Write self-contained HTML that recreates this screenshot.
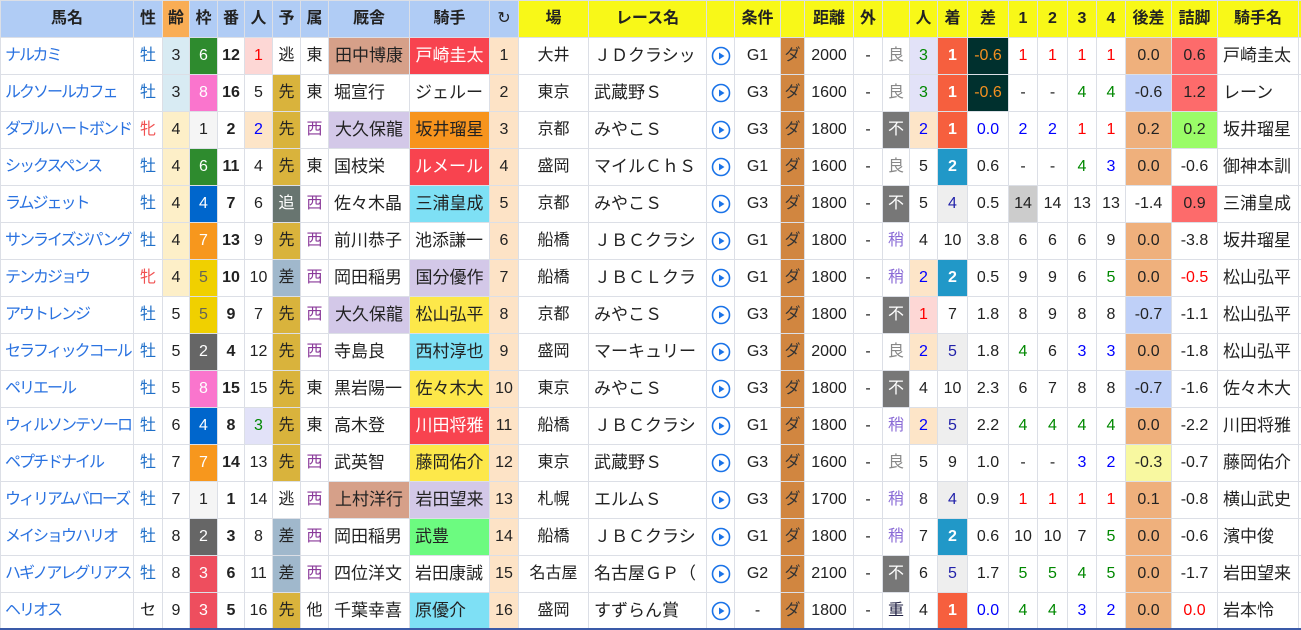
<!DOCTYPE html>
<html><head><meta charset="utf-8">
<style>
*{box-sizing:border-box;margin:0;padding:0}
body{width:1301px;height:630px;overflow:hidden;background:#fff;font-family:"Liberation Sans","Noto Sans CJK JP",sans-serif;font-size:16px;color:#222}
table{border-collapse:collapse;table-layout:fixed;width:1301px;position:absolute;left:0;top:0}
td,th{border:1px solid #dcdfe6;text-align:center;white-space:nowrap;overflow:hidden;padding:0;line-height:20px}
tr{height:37px}
th{font-weight:bold;background:#b0ccf5;color:#222;font-size:16px}
th.y{background:#f8f818}
th.o{background:#f9ad55}
td.n{text-align:left;padding-left:4px;color:#2a72e0;font-size:16px;letter-spacing:-2px}
td.l{text-align:left;padding-left:5px;font-size:17px}
td.k1,td.k2,td[class^="j"]{font-size:17px}
.m{color:#1f6fc8}.f{color:#f05050}
.a3{background:#d8ebf3}.a4{background:#fdefc8}
.w1{background:#f5f5f5}.w2{background:#666;color:#fff}.w3{background:#ee4e5e;color:#fff}.w4{background:#0066cc;color:#fff}.w5{background:#f0d000;color:#665}.w6{background:#2e8b2e;color:#fff}.w7{background:#f7971d;color:#fff}.w8{background:#fa75cd;color:#fff}
.b{font-weight:bold}
.p1{background:#fdd7d5;color:#f00}.p2{background:#fde5c8;color:#00f}.p3{background:#e2e2f8;color:#080}
.s{background:#d9b33c}.t{background:#687570;color:#fff}.d{background:#a0b8cc}
.W{color:#8a3a9a}
.k1{background:#d6a089}.k2{background:#d3c8e8}
.j1{background:#f8434f;color:#fff}.j2{background:#f7941d}.j3{background:#fde84a}.j4{background:#7ee0f5}.j5{background:#d3c8e8}.j6{background:#6cfb80}
.r{background:#fde3c6}
.da{background:#d18640;color:#333}
.fu{background:#777;color:#fff}.ry{color:#888}.yy{color:#8a6bd6}.om{color:#224}
.c1{background:#f65f3e;color:#fff;font-weight:bold}.c2{background:#2198c8;color:#fff;font-weight:bold}.c4{background:#eee;color:#22a}
.dk{background:#00302e;color:#f39020}
.R{color:#f00}.B{color:#00f}.G{color:#080}
.go{background:#efb07c}.gb{background:#bfd0f8}.gy{background:#f8f8a0}
.zr{background:#fd6b6b}.zg{background:#9afc68}
.gr{background:#ccc}
svg{display:block;margin:auto}
.bot{position:absolute;left:0;top:628px;width:1301px;height:2px;background:#3a5aa8}
</style></head><body>
<table>
<colgroup>
<col style="width:133px"><col style="width:29px"><col style="width:27px"><col style="width:28px"><col style="width:27px"><col style="width:28px"><col style="width:28px"><col style="width:28px"><col style="width:81px"><col style="width:80px"><col style="width:29px"><col style="width:70px"><col style="width:118px"><col style="width:28px"><col style="width:46px"><col style="width:24px"><col style="width:49px"><col style="width:29px"><col style="width:27px"><col style="width:28px"><col style="width:30px"><col style="width:41px"><col style="width:29px"><col style="width:30px"><col style="width:29px"><col style="width:29px"><col style="width:46px"><col style="width:46px"><col style="width:81px"><col style="width:3px">
</colgroup>
<tr><th>馬名</th><th>性</th><th class="o">齢</th><th>枠</th><th>番</th><th>人</th><th>予</th><th>属</th><th>厩舎</th><th>騎手</th><th style="font-weight:normal">↻</th><th class="y">場</th><th class="y">レース名</th><th class="y"></th><th class="y">条件</th><th class="y"></th><th class="y">距離</th><th class="y">外</th><th class="y"></th><th class="y">人</th><th class="y">着</th><th class="y">差</th><th class="y">1</th><th class="y">2</th><th class="y">3</th><th class="y">4</th><th class="y">後差</th><th class="y">詰脚</th><th class="y">騎手名</th><th class="y"></th></tr>
<tr><td class="n">ナルカミ</td><td class="m">牡</td><td class="a3">3</td><td class="w6">6</td><td class="b">12</td><td class="p1">1</td><td>逃</td><td>東</td><td class="k1">田中博康</td><td class="j1">戸崎圭太</td><td class="r">1</td><td>大井</td><td class="l">ＪＤクラシッ</td><td><svg width="20" height="20"><circle cx="10" cy="10" r="8.5" fill="none" stroke="#1a73e8" stroke-width="1.6"/><path d="M8 6.5L13.5 10L8 13.5Z" fill="#1a73e8"/></svg></td><td>G1</td><td class="da">ダ</td><td>2000</td><td>-</td><td class="ry">良</td><td class="p3">3</td><td class="c1">1</td><td class="dk">-0.6</td><td class="R">1</td><td class="R">1</td><td class="R">1</td><td class="R">1</td><td class="go">0.0</td><td class="zr">0.6</td><td class="l">戸崎圭太</td><td></td></tr>
<tr><td class="n">ルクソールカフェ</td><td class="m">牡</td><td class="a3">3</td><td class="w8">8</td><td class="b">16</td><td>5</td><td class="s">先</td><td>東</td><td class="l">堀宣行</td><td class="l">ジェルー</td><td class="r">2</td><td>東京</td><td class="l">武蔵野Ｓ</td><td><svg width="20" height="20"><circle cx="10" cy="10" r="8.5" fill="none" stroke="#1a73e8" stroke-width="1.6"/><path d="M8 6.5L13.5 10L8 13.5Z" fill="#1a73e8"/></svg></td><td>G3</td><td class="da">ダ</td><td>1600</td><td>-</td><td class="ry">良</td><td class="p3">3</td><td class="c1">1</td><td class="dk">-0.6</td><td>-</td><td>-</td><td class="G">4</td><td class="G">4</td><td class="gb">-0.6</td><td class="zr">1.2</td><td class="l">レーン</td><td></td></tr>
<tr><td class="n">ダブルハートボンド</td><td class="f">牝</td><td class="a4">4</td><td class="w1">1</td><td class="b">2</td><td class="p2">2</td><td class="s">先</td><td class="W">西</td><td class="k2">大久保龍</td><td class="j2">坂井瑠星</td><td class="r">3</td><td>京都</td><td class="l">みやこＳ</td><td><svg width="20" height="20"><circle cx="10" cy="10" r="8.5" fill="none" stroke="#1a73e8" stroke-width="1.6"/><path d="M8 6.5L13.5 10L8 13.5Z" fill="#1a73e8"/></svg></td><td>G3</td><td class="da">ダ</td><td>1800</td><td>-</td><td class="fu">不</td><td class="p2">2</td><td class="c1">1</td><td class="B">0.0</td><td class="B">2</td><td class="B">2</td><td class="R">1</td><td class="R">1</td><td class="go">0.2</td><td class="zg">0.2</td><td class="l">坂井瑠星</td><td></td></tr>
<tr><td class="n">シックスペンス</td><td class="m">牡</td><td class="a4">4</td><td class="w6">6</td><td class="b">11</td><td>4</td><td class="s">先</td><td>東</td><td class="l">国枝栄</td><td class="j1 l">ルメール</td><td class="r">4</td><td>盛岡</td><td class="l">マイルＣｈＳ</td><td><svg width="20" height="20"><circle cx="10" cy="10" r="8.5" fill="none" stroke="#1a73e8" stroke-width="1.6"/><path d="M8 6.5L13.5 10L8 13.5Z" fill="#1a73e8"/></svg></td><td>G1</td><td class="da">ダ</td><td>1600</td><td>-</td><td class="ry">良</td><td>5</td><td class="c2">2</td><td>0.6</td><td>-</td><td>-</td><td class="G">4</td><td class="B">3</td><td class="go">0.0</td><td>-0.6</td><td class="l">御神本訓</td><td></td></tr>
<tr><td class="n">ラムジェット</td><td class="m">牡</td><td class="a4">4</td><td class="w4">4</td><td class="b">7</td><td>6</td><td class="t">追</td><td class="W">西</td><td class="l">佐々木晶</td><td class="j4">三浦皇成</td><td class="r">5</td><td>京都</td><td class="l">みやこＳ</td><td><svg width="20" height="20"><circle cx="10" cy="10" r="8.5" fill="none" stroke="#1a73e8" stroke-width="1.6"/><path d="M8 6.5L13.5 10L8 13.5Z" fill="#1a73e8"/></svg></td><td>G3</td><td class="da">ダ</td><td>1800</td><td>-</td><td class="fu">不</td><td>5</td><td class="c4">4</td><td>0.5</td><td class="gr">14</td><td>14</td><td>13</td><td>13</td><td>-1.4</td><td class="zr">0.9</td><td class="l">三浦皇成</td><td></td></tr>
<tr><td class="n">サンライズジパング</td><td class="m">牡</td><td class="a4">4</td><td class="w7">7</td><td class="b">13</td><td>9</td><td class="s">先</td><td class="W">西</td><td class="l">前川恭子</td><td class="l">池添謙一</td><td class="r">6</td><td>船橋</td><td class="l">ＪＢＣクラシ</td><td><svg width="20" height="20"><circle cx="10" cy="10" r="8.5" fill="none" stroke="#1a73e8" stroke-width="1.6"/><path d="M8 6.5L13.5 10L8 13.5Z" fill="#1a73e8"/></svg></td><td>G1</td><td class="da">ダ</td><td>1800</td><td>-</td><td class="yy">稍</td><td>4</td><td>10</td><td>3.8</td><td>6</td><td>6</td><td>6</td><td>9</td><td class="go">0.0</td><td>-3.8</td><td class="l">坂井瑠星</td><td></td></tr>
<tr><td class="n">テンカジョウ</td><td class="f">牝</td><td class="a4">4</td><td class="w5">5</td><td class="b">10</td><td>10</td><td class="d">差</td><td class="W">西</td><td class="l">岡田稲男</td><td class="j5">国分優作</td><td class="r">7</td><td>船橋</td><td class="l">ＪＢＣＬクラ</td><td><svg width="20" height="20"><circle cx="10" cy="10" r="8.5" fill="none" stroke="#1a73e8" stroke-width="1.6"/><path d="M8 6.5L13.5 10L8 13.5Z" fill="#1a73e8"/></svg></td><td>G1</td><td class="da">ダ</td><td>1800</td><td>-</td><td class="yy">稍</td><td class="p2">2</td><td class="c2">2</td><td>0.5</td><td>9</td><td>9</td><td>6</td><td class="G">5</td><td class="go">0.0</td><td class="R">-0.5</td><td class="l">松山弘平</td><td></td></tr>
<tr><td class="n">アウトレンジ</td><td class="m">牡</td><td>5</td><td class="w5">5</td><td class="b">9</td><td>7</td><td class="s">先</td><td class="W">西</td><td class="k2">大久保龍</td><td class="j3">松山弘平</td><td class="r">8</td><td>京都</td><td class="l">みやこＳ</td><td><svg width="20" height="20"><circle cx="10" cy="10" r="8.5" fill="none" stroke="#1a73e8" stroke-width="1.6"/><path d="M8 6.5L13.5 10L8 13.5Z" fill="#1a73e8"/></svg></td><td>G3</td><td class="da">ダ</td><td>1800</td><td>-</td><td class="fu">不</td><td class="p1">1</td><td>7</td><td>1.8</td><td>8</td><td>9</td><td>8</td><td>8</td><td class="gb">-0.7</td><td>-1.1</td><td class="l">松山弘平</td><td></td></tr>
<tr><td class="n">セラフィックコール</td><td class="m">牡</td><td>5</td><td class="w2">2</td><td class="b">4</td><td>12</td><td class="s">先</td><td class="W">西</td><td class="l">寺島良</td><td class="j4">西村淳也</td><td class="r">9</td><td>盛岡</td><td class="l">マーキュリー</td><td><svg width="20" height="20"><circle cx="10" cy="10" r="8.5" fill="none" stroke="#1a73e8" stroke-width="1.6"/><path d="M8 6.5L13.5 10L8 13.5Z" fill="#1a73e8"/></svg></td><td>G3</td><td class="da">ダ</td><td>2000</td><td>-</td><td class="ry">良</td><td class="p2">2</td><td class="c4">5</td><td>1.8</td><td class="G">4</td><td>6</td><td class="B">3</td><td class="B">3</td><td class="go">0.0</td><td>-1.8</td><td class="l">松山弘平</td><td></td></tr>
<tr><td class="n">ペリエール</td><td class="m">牡</td><td>5</td><td class="w8">8</td><td class="b">15</td><td>15</td><td class="s">先</td><td>東</td><td class="l">黒岩陽一</td><td class="j3">佐々木大</td><td class="r">10</td><td>東京</td><td class="l">みやこＳ</td><td><svg width="20" height="20"><circle cx="10" cy="10" r="8.5" fill="none" stroke="#1a73e8" stroke-width="1.6"/><path d="M8 6.5L13.5 10L8 13.5Z" fill="#1a73e8"/></svg></td><td>G3</td><td class="da">ダ</td><td>1800</td><td>-</td><td class="fu">不</td><td>4</td><td>10</td><td>2.3</td><td>6</td><td>7</td><td>8</td><td>8</td><td class="gb">-0.7</td><td>-1.6</td><td class="l">佐々木大</td><td></td></tr>
<tr><td class="n">ウィルソンテソーロ</td><td class="m">牡</td><td>6</td><td class="w4">4</td><td class="b">8</td><td class="p3">3</td><td class="s">先</td><td>東</td><td class="l">高木登</td><td class="j1">川田将雅</td><td class="r">11</td><td>船橋</td><td class="l">ＪＢＣクラシ</td><td><svg width="20" height="20"><circle cx="10" cy="10" r="8.5" fill="none" stroke="#1a73e8" stroke-width="1.6"/><path d="M8 6.5L13.5 10L8 13.5Z" fill="#1a73e8"/></svg></td><td>G1</td><td class="da">ダ</td><td>1800</td><td>-</td><td class="yy">稍</td><td class="p2">2</td><td class="c4">5</td><td>2.2</td><td class="G">4</td><td class="G">4</td><td class="G">4</td><td class="G">4</td><td class="go">0.0</td><td>-2.2</td><td class="l">川田将雅</td><td></td></tr>
<tr><td class="n">ペプチドナイル</td><td class="m">牡</td><td>7</td><td class="w7">7</td><td class="b">14</td><td>13</td><td class="s">先</td><td class="W">西</td><td class="l">武英智</td><td class="j3">藤岡佑介</td><td class="r">12</td><td>東京</td><td class="l">武蔵野Ｓ</td><td><svg width="20" height="20"><circle cx="10" cy="10" r="8.5" fill="none" stroke="#1a73e8" stroke-width="1.6"/><path d="M8 6.5L13.5 10L8 13.5Z" fill="#1a73e8"/></svg></td><td>G3</td><td class="da">ダ</td><td>1600</td><td>-</td><td class="ry">良</td><td>5</td><td>9</td><td>1.0</td><td>-</td><td>-</td><td class="B">3</td><td class="B">2</td><td class="gy">-0.3</td><td>-0.7</td><td class="l">藤岡佑介</td><td></td></tr>
<tr><td class="n">ウィリアムバローズ</td><td class="m">牡</td><td>7</td><td class="w1">1</td><td class="b">1</td><td>14</td><td>逃</td><td class="W">西</td><td class="k1">上村洋行</td><td class="j5">岩田望来</td><td class="r">13</td><td>札幌</td><td class="l">エルムＳ</td><td><svg width="20" height="20"><circle cx="10" cy="10" r="8.5" fill="none" stroke="#1a73e8" stroke-width="1.6"/><path d="M8 6.5L13.5 10L8 13.5Z" fill="#1a73e8"/></svg></td><td>G3</td><td class="da">ダ</td><td>1700</td><td>-</td><td class="yy">稍</td><td>8</td><td class="c4">4</td><td>0.9</td><td class="R">1</td><td class="R">1</td><td class="R">1</td><td class="R">1</td><td class="go">0.1</td><td>-0.8</td><td class="l">横山武史</td><td></td></tr>
<tr><td class="n">メイショウハリオ</td><td class="m">牡</td><td>8</td><td class="w2">2</td><td class="b">3</td><td>8</td><td class="d">差</td><td class="W">西</td><td class="l">岡田稲男</td><td class="j6 l">武豊</td><td class="r">14</td><td>船橋</td><td class="l">ＪＢＣクラシ</td><td><svg width="20" height="20"><circle cx="10" cy="10" r="8.5" fill="none" stroke="#1a73e8" stroke-width="1.6"/><path d="M8 6.5L13.5 10L8 13.5Z" fill="#1a73e8"/></svg></td><td>G1</td><td class="da">ダ</td><td>1800</td><td>-</td><td class="yy">稍</td><td>7</td><td class="c2">2</td><td>0.6</td><td>10</td><td>10</td><td>7</td><td class="G">5</td><td class="go">0.0</td><td>-0.6</td><td class="l">濱中俊</td><td></td></tr>
<tr><td class="n">ハギノアレグリアス</td><td class="m">牡</td><td>8</td><td class="w3">3</td><td class="b">6</td><td>11</td><td class="d">差</td><td class="W">西</td><td class="l">四位洋文</td><td class="l">岩田康誠</td><td class="r">15</td><td>名古屋</td><td class="l">名古屋ＧＰ（</td><td><svg width="20" height="20"><circle cx="10" cy="10" r="8.5" fill="none" stroke="#1a73e8" stroke-width="1.6"/><path d="M8 6.5L13.5 10L8 13.5Z" fill="#1a73e8"/></svg></td><td>G2</td><td class="da">ダ</td><td>2100</td><td>-</td><td class="fu">不</td><td>6</td><td class="c4">5</td><td>1.7</td><td class="G">5</td><td class="G">5</td><td class="G">4</td><td class="G">5</td><td class="go">0.0</td><td>-1.7</td><td class="l">岩田望来</td><td></td></tr>
<tr><td class="n">ヘリオス</td><td>セ</td><td>9</td><td class="w3">3</td><td class="b">5</td><td>16</td><td class="s">先</td><td>他</td><td class="l">千葉幸喜</td><td class="j4 l">原優介</td><td class="r">16</td><td>盛岡</td><td class="l">すずらん賞</td><td><svg width="20" height="20"><circle cx="10" cy="10" r="8.5" fill="none" stroke="#1a73e8" stroke-width="1.6"/><path d="M8 6.5L13.5 10L8 13.5Z" fill="#1a73e8"/></svg></td><td>-</td><td class="da">ダ</td><td>1800</td><td>-</td><td class="om">重</td><td>4</td><td class="c1">1</td><td class="B">0.0</td><td class="G">4</td><td class="G">4</td><td class="B">3</td><td class="B">2</td><td class="go">0.0</td><td class="R">0.0</td><td class="l">岩本怜</td><td></td></tr>
</table>
<div class="bot"></div>
</body></html>
